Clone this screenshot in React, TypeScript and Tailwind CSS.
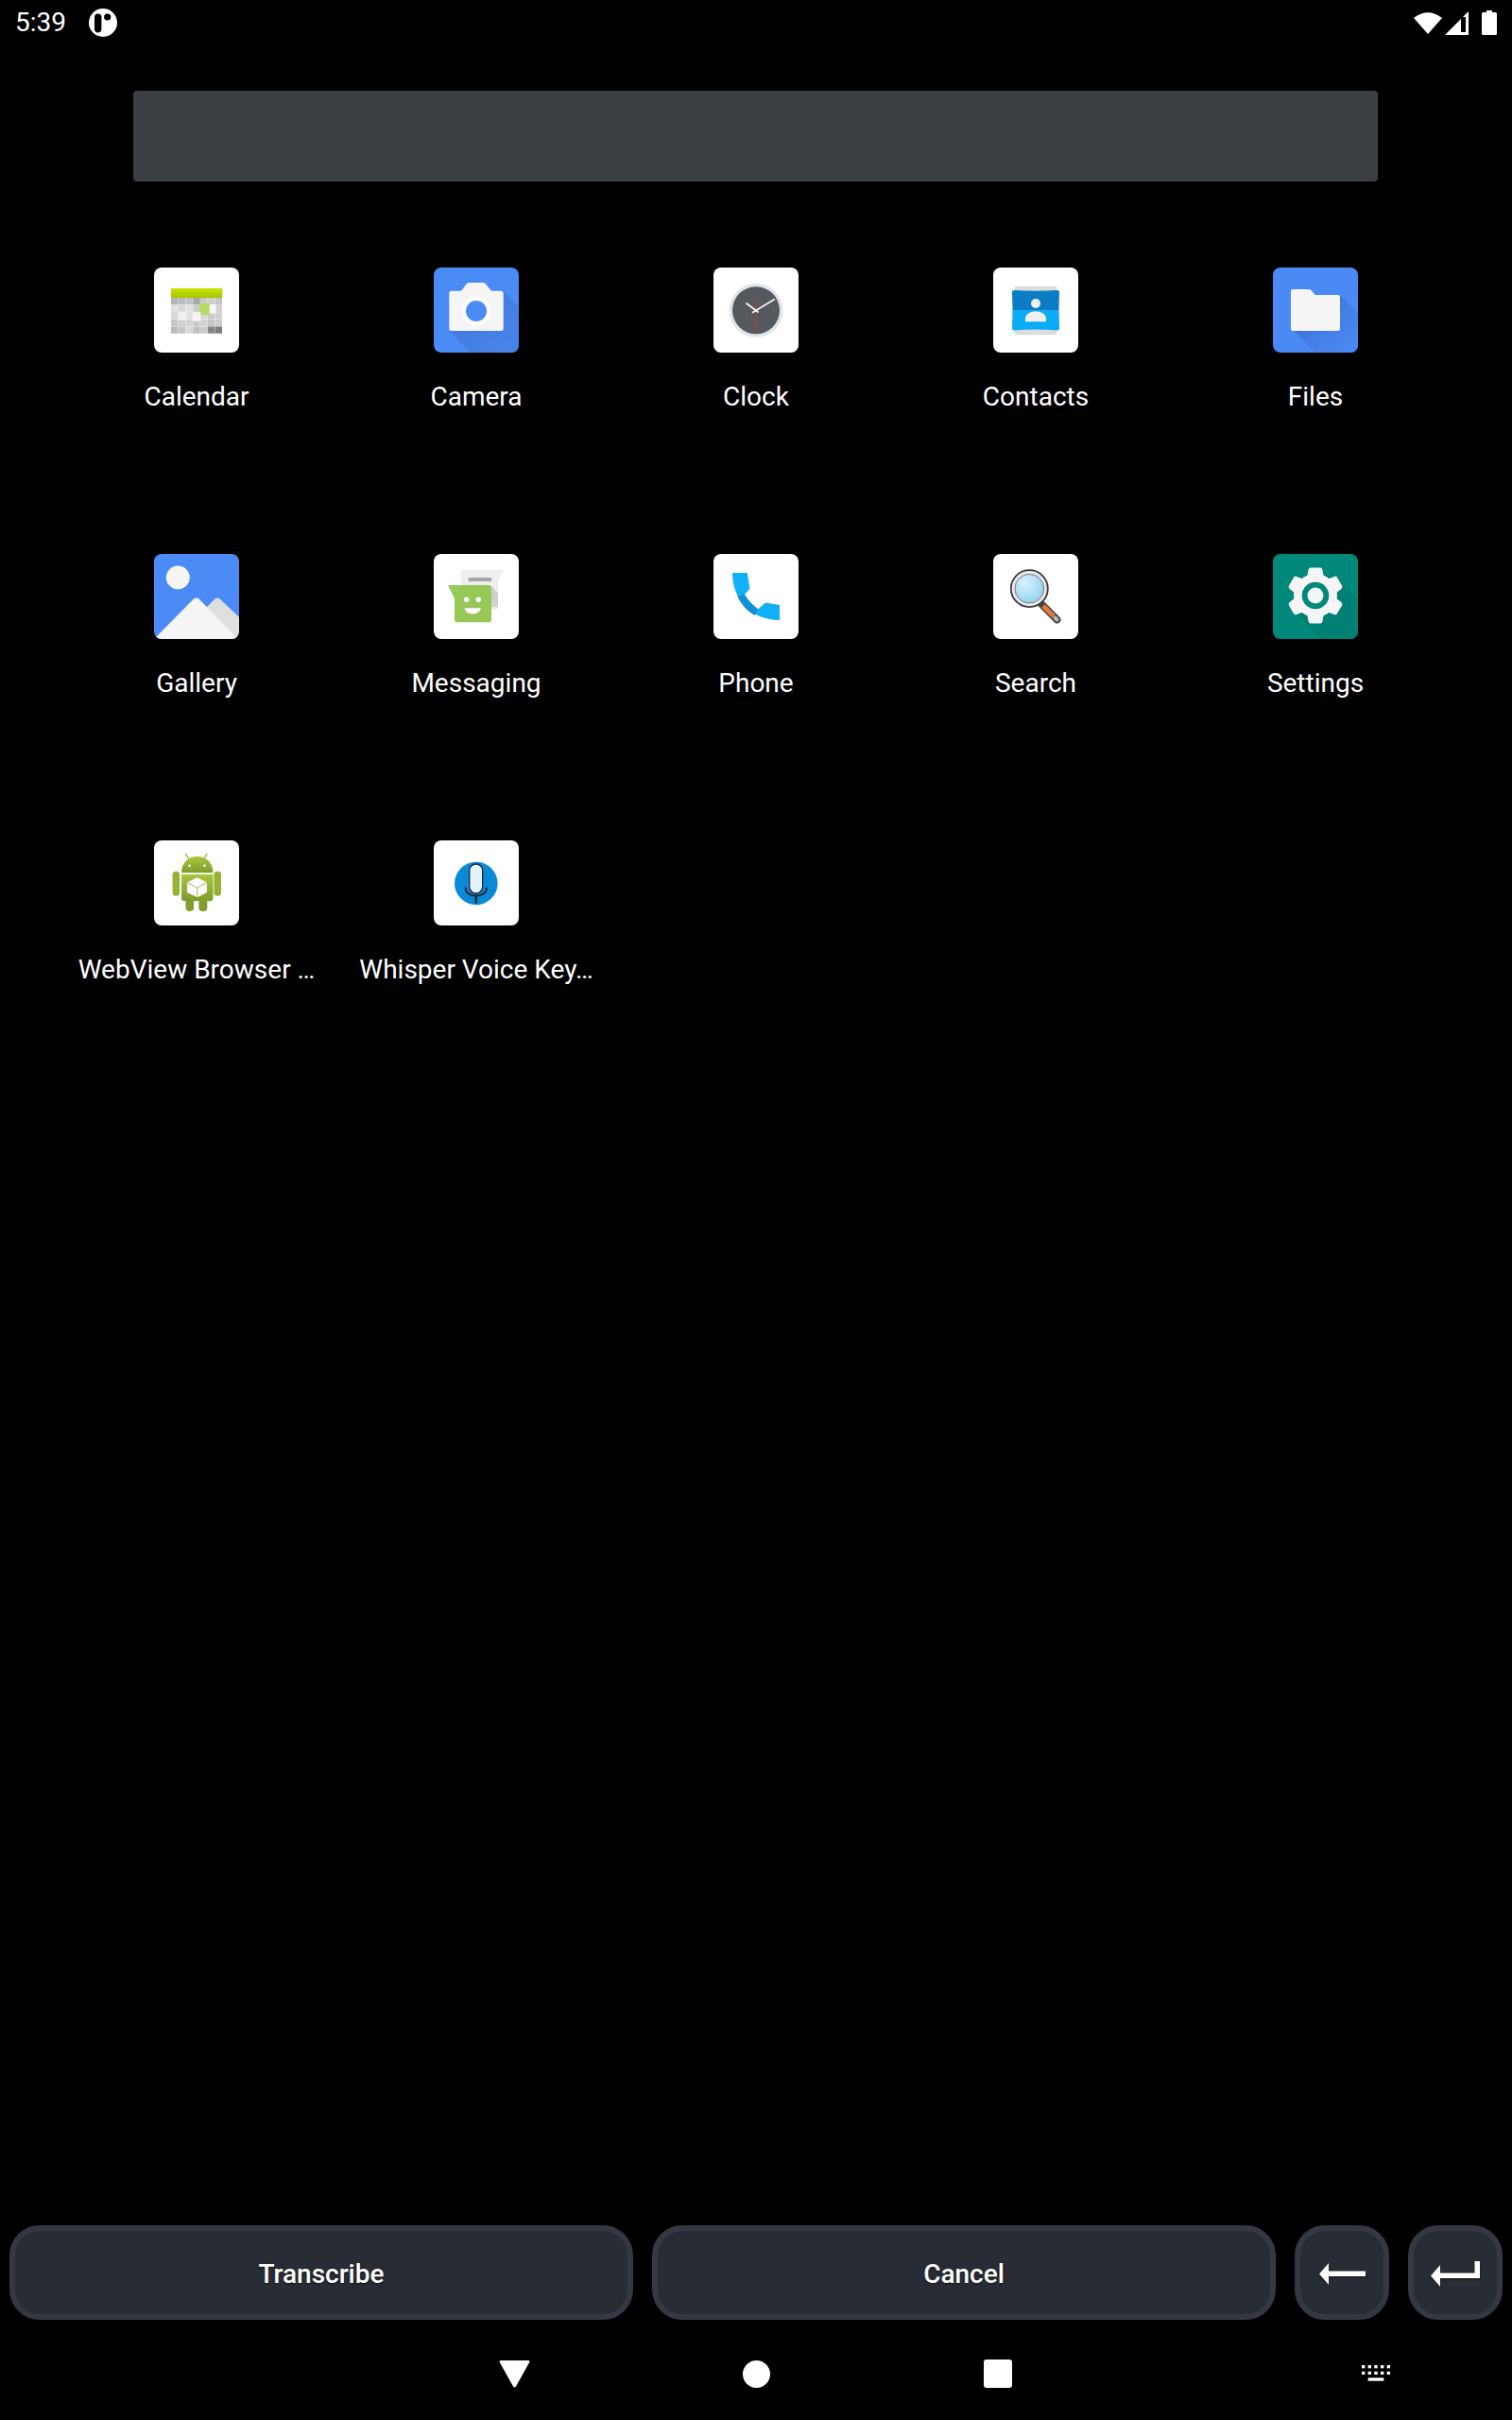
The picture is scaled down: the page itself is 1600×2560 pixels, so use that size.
import React from 'react';

const Tile: React.FC<{ bg?: string; children: React.ReactNode }> = ({ bg = 'bg-white', children }) => (
  <div className={`w-[90px] h-[90px] rounded-[8px] overflow-hidden ${bg}`}>
    <svg width="90" height="90" viewBox="0 0 90 90" className="block">{children}</svg>
  </div>
);

// grey levels of the calendar tiles, row by row
const calendarRows = [
  ['#b4b4b4', '#bcbcbc', '#c2c2c2', '#a8a8a8', '#c8c8c8', '#cecece', '#c4c4c4'],
  ['#e0e0e0', '#d8d8d8', '#e2e2e2', '#cccccc', '#d8d8d8', '#dcdcdc', '#d2d2d2'],
  ['#d8d8d8', '#d0d0d0', '#dedede', '#d2d2d2', '#d6d6d6', '#cccccc', '#d2d2d2'],
  ['#c8c8c8', '#d0d0d0', '#d4d4d4', '#c8c8c8', '#d2d2d2', '#c6c6c6', '#cccccc'],
  ['#bcbcbc', '#c4c4c4', '#dadada', '#c0c0c0', '#cacaca', '#868686', '#7c7c7c'],
];

const CalendarIcon = () => (
  <Tile>
    <defs>
      <linearGradient id="calTop" x1="0" y1="0" x2="0" y2="1">
        <stop offset="0" stopColor="#cbe400" />
        <stop offset="1" stopColor="#a5c300" />
      </linearGradient>
    </defs>
    {calendarRows.map((row, r) =>
      row.map((c, i) => <rect key={`${r}-${i}`} x={18 + i * 7.75} y={32 + r * 7.6} width="7.5" height="7.35" fill={c} />)
    )}
    <rect x="18" y="22" width="54.3" height="10" fill="url(#calTop)" />
    <rect x="58" y="39" width="7.5" height="9.5" fill="#f7f7f7" />
    <rect x="48" y="38" width="10.7" height="12" fill="#b5db63" />
    <rect x="40.7" y="47.3" width="8.6" height="9.4" fill="#f4f4f4" />
    <rect x="25.7" y="46.7" width="9" height="9" fill="#f0f0f0" />
  </Tile>
);

const CameraIcon = () => (
  <Tile bg="bg-[#4b8bf5]">
    <defs>
      <linearGradient id="camShade" x1="0.2" y1="0.2" x2="0.9" y2="0.9">
        <stop offset="0" stopColor="#4279dc" />
        <stop offset="1" stopColor="#4984ea" />
      </linearGradient>
    </defs>
    <polygon points="16.3,67 39,90 90,90 90,42 73.7,25" fill="url(#camShade)" />
    <path d="M19 24.7 H29 L34.5 17.5 Q35.5 16 37.5 16 H52 Q54 16 55 17.5 L61 24.7 H71 Q73.7 24.7 73.7 27.5 V64.5 Q73.7 67 71 67 H19 Q16.3 67 16.3 64.5 V27.5 Q16.3 24.7 19 24.7Z" fill="#f5f5f5" />
    <circle cx="45" cy="46" r="15" fill="#ffffff" />
    <circle cx="45" cy="46" r="11" fill="#4b8bf5" />
  </Tile>
);

const ClockIcon = () => (
  <Tile>
    <circle cx="45" cy="45.3" r="28.4" fill="#dfe3ea" />
    <circle cx="45" cy="45.3" r="25" fill="#55585c" />
    <path d="M45 36 V67" stroke="#a5452f" strokeWidth="1.4" />
    <path d="M41.5 47.5 L64.3 33.7" stroke="#f5f5f5" strokeWidth="1.6" strokeLinecap="round" />
    <path d="M47 47 L35 38" stroke="#f5f5f5" strokeWidth="1.8" strokeLinecap="round" />
  </Tile>
);

const ContactsIcon = () => (
  <Tile>
    <path d="M23 19.7 H67 L68 30 V62 L67 71.3 H23 L22 62 V30Z" fill="#dcdcdc" />
    <path d="M20 26 Q20 24 22 24 Q45 25.5 68 24 Q70 24 70 26 L69.5 45 H20.5Z" fill="#0b7dc4" />
    <path d="M20.5 45 H69.5 L70 64 Q70 66.5 68 66.5 Q45 64.5 22 66.5 Q20 66.5 20 64Z" fill="#0cabf5" />
    <circle cx="45" cy="38" r="5" fill="#f0f0f0" />
    <path d="M34 57.3 V54.5 C34 49 40 46.3 45 46.3 C50 46.3 56 49 56 54.5 V57.3Z" fill="#f0f0f0" />
  </Tile>
);

const FilesIcon = () => (
  <Tile bg="bg-[#4a8af4]">
    <defs>
      <linearGradient id="fileShade" x1="0.3" y1="0.3" x2="0.9" y2="0.9">
        <stop offset="0" stopColor="#3f76d8" />
        <stop offset="1" stopColor="#4a8af4" />
      </linearGradient>
    </defs>
    <polygon points="21,66 45,90 90,90 90,48 70,29" fill="url(#fileShade)" />
    <path d="M21 23 H38 Q40 23 41 24.5 L44.7 29 H69 Q71 29 71 31 V65 Q71 67 69 67 H21 Q19 67 19 65 V25 Q19 23 21 23Z" fill="#f5f5f5" />
  </Tile>
);

const GalleryIcon = () => (
  <Tile bg="bg-[#4b8bf5]">
    <circle cx="25.3" cy="26" r="12.5" fill="#3f78d8" opacity="0.5" />
    <circle cx="25.3" cy="25" r="12.5" fill="#f5f5f5" />
    <path d="M55 57 L64.5 47.5 Q67 45.5 69.5 47.5 L90 66.7 V90 H70Z" fill="#dfdfdf" />
    <path d="M2 88 L42 47.5 Q44.7 45.5 47.5 47.5 L87 88 Q88 90 86 90 H3 Z" fill="#f5f5f5" />
  </Tile>
);

const MessagingIcon = () => (
  <Tile>
    <path d="M31 16.7 H75 L68 28 V56 Q68 59 65 59 H31 Q28.7 59 28.7 56 V19 Q28.7 16.7 31 16.7Z" fill="#eeeeee" />
    <polygon points="61,33 68,42 68,56 61,56" fill="#d0d0d0" />
    <rect x="36.7" y="25" width="24.3" height="4" fill="#a8a8a8" />
    <path d="M15 33 H58 Q61 33 61 36 V69.5 Q61 72.3 58 72.3 H25 Q22 72.3 22 69.5 V47Z" fill="#95c856" />
    <circle cx="34.7" cy="48.3" r="2.7" fill="#ffffff" />
    <circle cx="47.3" cy="48.3" r="2.7" fill="#ffffff" />
    <path d="M32.3 57.3 H50 Q48 63.5 41 63.5 Q34.5 63.5 32.3 57.3Z" fill="#ffffff" />
  </Tile>
);

const PhoneIcon = () => (
  <Tile>
    <path d="M20 20 H35.7 L38.5 36.5 L33 43 C37 50 42 54 47 58.5 L55 51.5 L70 54 V70 C40 70 20 48 20 20Z" fill="#12b0f7" />
    <path d="M25.5 45.5 L33 43 C37 50 42 54 47 58.5 L44 65 C36 61 30 54 25.5 45.5Z" fill="#0f8fd4" />
  </Tile>
);

const SearchIcon = () => (
  <Tile>
    <defs>
      <radialGradient id="lens" cx="0.35" cy="0.3" r="0.8">
        <stop offset="0" stopColor="#d8f1fb" />
        <stop offset="1" stopColor="#8fd0f0" />
      </radialGradient>
    </defs>
    <path d="M52 54 L67.5 69.5" stroke="#444444" strokeWidth="8" strokeLinecap="round" />
    <path d="M53 55 L64 66" stroke="#e07a3a" strokeWidth="5" />
    <path d="M65.5 67.5 L67.5 69.5" stroke="#b8b8b8" strokeWidth="4" strokeLinecap="round" />
    <circle cx="38.3" cy="36.7" r="19.5" fill="#e8e8e8" stroke="#3c3c3c" strokeWidth="1.8" />
    <circle cx="38.3" cy="36.7" r="15.3" fill="url(#lens)" stroke="#777777" strokeWidth="1" />
  </Tile>
);

const SettingsIcon = () => (
  <Tile bg="bg-[#00897b]">
    <polygon points="62,20 90,48 90,90 52,90 28,66" fill="#007f73" />
    <g fill="#f5f5f5">
      <circle cx="45" cy="44" r="23" />
      {[0, 60, 120, 180, 240, 300].map((a) => (
        <path key={a} transform={`rotate(${a} 45 44)`} d="M36 26 L37.5 16.8 Q37.8 14.5 40 14.5 H50 Q52.2 14.5 52.5 16.8 L54 26Z" />
      ))}
    </g>
    <circle cx="45" cy="44" r="14.3" fill="#00897b" />
    <circle cx="45" cy="44" r="8.5" fill="#f5f5f5" />
  </Tile>
);

const WebViewIcon = () => (
  <Tile>
    <defs>
      <linearGradient id="droid" x1="0" y1="0" x2="0" y2="1">
        <stop offset="0" stopColor="#a9c63f" />
        <stop offset="1" stopColor="#7d9c2c" />
      </linearGradient>
    </defs>
    <g stroke="#9dbb3a" strokeWidth="1.4" strokeLinecap="round">
      <path d="M37 20 L33.5 14.3" />
      <path d="M52.4 20 L56 14.3" />
    </g>
    <path d="M29 34.3 C29 24 36 17 45.7 17 C55.5 17 62.5 24 62.5 34.3Z" fill="url(#droid)" />
    <circle cx="37.5" cy="26.7" r="1.3" fill="#ffffff" />
    <circle cx="53.5" cy="26.7" r="1.3" fill="#ffffff" />
    <path d="M29 36 H62.5 V61 Q62.5 64.3 59 64.3 H32.5 Q29 64.3 29 61Z" fill="url(#droid)" />
    <rect x="19.6" y="32.7" width="7.4" height="26" rx="3.5" fill="#94b236" />
    <rect x="63.4" y="32.7" width="7.6" height="26" rx="3.5" fill="#94b236" />
    <rect x="33.5" y="62" width="8.6" height="13" rx="4" fill="#7f9e2d" />
    <rect x="47.3" y="62" width="9" height="13" rx="4" fill="#7f9e2d" />
    <polygon points="45.8,39.3 56,44.5 56,55 45.8,60.3 35,55 35,44.5" fill="#ffffff" />
    <path d="M35 44.5 L45.8 50 L56 44.5 M45.8 50 V60.3" stroke="#8aa833" strokeWidth="0.8" fill="none" />
  </Tile>
);

const WhisperIcon = () => (
  <Tile>
    <circle cx="44.8" cy="45.5" r="22.8" fill="#0a8ad6" />
    <rect x="37.7" y="25" width="14" height="31" rx="7" fill="#e3f3fd" stroke="#1e2b3a" strokeWidth="1.4" />
    <path d="M33.7 49.5 V51 C33.7 55.5 38.5 58.5 44.8 58.5 C51 58.5 55.8 55.5 55.8 51 V49.5" fill="none" stroke="#1e2b3a" strokeWidth="2" />
    <path d="M44.8 58 V66.5" stroke="#1e2b3a" strokeWidth="2.6" />
  </Tile>
);

const apps: { name: string; icon: React.ReactNode }[] = [
  { name: 'Calendar', icon: <CalendarIcon /> },
  { name: 'Camera', icon: <CameraIcon /> },
  { name: 'Clock', icon: <ClockIcon /> },
  { name: 'Contacts', icon: <ContactsIcon /> },
  { name: 'Files', icon: <FilesIcon /> },
  { name: 'Gallery', icon: <GalleryIcon /> },
  { name: 'Messaging', icon: <MessagingIcon /> },
  { name: 'Phone', icon: <PhoneIcon /> },
  { name: 'Search', icon: <SearchIcon /> },
  { name: 'Settings', icon: <SettingsIcon /> },
  { name: 'WebView Browser …', icon: <WebViewIcon /> },
  { name: 'Whisper Voice Key…', icon: <WhisperIcon /> },
];

const StatusBar = () => (
  <div className="h-[48px] flex items-center pl-[16px] pr-[16px] text-white">
    <span className="text-[28px] leading-[48px]">5:39</span>
    <svg width="30" height="30" viewBox="0 0 30 30" className="ml-[24px]">
      <circle cx="15" cy="15" r="15" fill="#ffffff" />
      <rect x="6" y="5.5" width="7.4" height="20" rx="3.7" fill="#000000" />
      <circle cx="19.7" cy="9" r="3.6" fill="#000000" />
    </svg>
    <div className="ml-auto flex items-center">
      <svg width="30" height="24" viewBox="0 0 30 24">
        <path d="M0 7 Q15 -4.5 30 7 L15 24Z" fill="#ffffff" />
      </svg>
      <svg width="25" height="25" viewBox="0 0 25 25" className="ml-[3px]">
        <polygon points="25,0 25,25 0,25" fill="#ffffff" />
        <rect x="17" y="6" width="5" height="16" fill="#000000" />
      </svg>
      <svg width="16" height="26" viewBox="0 0 16 26" className="ml-[14px]">
        <path d="M5 0 H11 V2 H14.5 Q16 2 16 3.5 V24.5 Q16 26 14.5 26 H1.5 Q0 26 0 24.5 V3.5 Q0 2 1.5 2 H5Z" fill="#ffffff" />
      </svg>
    </div>
  </div>
);

const KeyButton: React.FC<{ className: string; children: React.ReactNode }> = ({ className, children }) => (
  <button className={`h-[100px] pt-[3px] rounded-[32px] border-[6px] border-[#333843] bg-[#282c34] flex items-center justify-center text-white text-[28px] font-medium [text-shadow:0_1px_2px_rgba(0,0,0,0.6)] ${className}`}>
    {children}
  </button>
);

export default function App() {
  return (
    <div className="w-[1600px] h-[2560px] bg-black flex flex-col font-[Roboto,sans-serif]">
      <StatusBar />

      <div className="mt-[48px] ml-[141px] mr-[142px] h-[96px] rounded-[4px] bg-[#3c4043]" />

      <div className="mt-[91px] px-[60px] grid grid-cols-5 auto-rows-[303px]">
        {apps.map((app) => (
          <div key={app.name} className="flex flex-col items-center">
            {app.icon}
            <span className="mt-[30px] text-[28px] leading-[34px] text-white whitespace-nowrap">{app.name}</span>
          </div>
        ))}
      </div>

      <div className="mt-auto px-[10px] flex gap-[20px]">
        <KeyButton className="w-[660px]">Transcribe</KeyButton>
        <KeyButton className="w-[660px]">Cancel</KeyButton>
        <KeyButton className="w-[100px]">
          <svg width="49" height="23" viewBox="0 0 49 23" className="drop-shadow-[0_1px_1px_rgba(0,0,0,0.6)]">
            <path d="M0 11.5 L10 0 V8.5 H49 V14 H10 V23Z" fill="#ffffff" />
          </svg>
        </KeyButton>
        <KeyButton className="w-[100px]">
          <svg width="52" height="27" viewBox="0 0 52 27" className="drop-shadow-[0_1px_1px_rgba(0,0,0,0.6)]">
            <path d="M0 15.5 L10 4 V12.5 H46.5 V0 H52 V18 H10 V27Z" fill="#ffffff" />
          </svg>
        </KeyButton>
      </div>

      <div className="h-[106px] pt-[8px] pl-[512px] flex items-center">
        <div className="w-[64px] flex justify-center">
          <svg width="33" height="29" viewBox="0 0 33 29">
            <path d="M2 0 H31 Q33 0 32.2 2 L18 27.5 Q16.5 29.5 15 27.5 L0.8 2 Q0 0 2 0Z" fill="#ffffff" />
          </svg>
        </div>
        <div className="w-[64px] ml-[192px] flex justify-center">
          <div className="w-[29px] h-[29px] rounded-full bg-white" />
        </div>
        <div className="w-[64px] ml-[192px] flex justify-center">
          <div className="w-[30px] h-[30px] rounded-[3px] bg-white" />
        </div>
        <svg width="30" height="18" viewBox="0 0 30 18" className="ml-[353px]">
          <g fill="#ffffff">
            {[0, 6.67, 13.33, 20, 26.67].map((x) => (
              <React.Fragment key={x}>
                <rect x={x} y="0" width="3.33" height="3.33" />
                <rect x={x} y="6.67" width="3.33" height="3.33" />
              </React.Fragment>
            ))}
            <rect x="6.67" y="13.33" width="16.67" height="3.34" />
          </g>
        </svg>
      </div>
    </div>
  );
}
